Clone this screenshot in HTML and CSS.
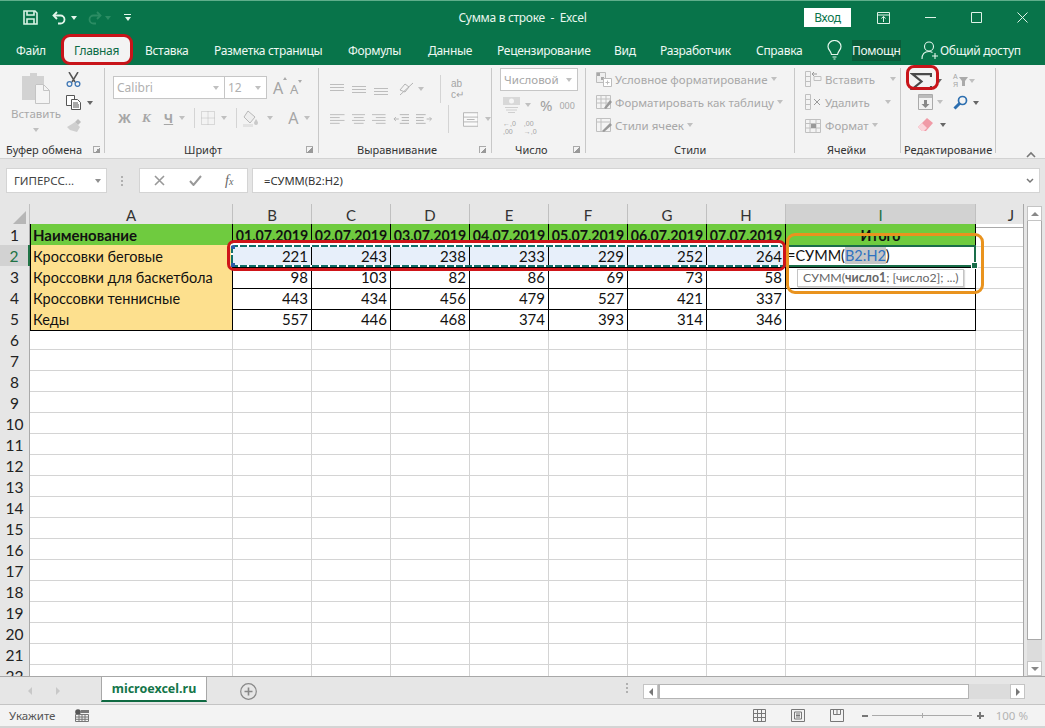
FILE: index.html
```html
<!DOCTYPE html>
<html lang="ru">
<head>
<meta charset="utf-8">
<title>Сумма в строке - Excel</title>
<link rel="stylesheet" href="styles.css">
</head>
<body>
<div class="app">
  <header class="titlebar">
    <div class="qat">
      <svg class="q-save" width="15" height="15" viewBox="0 0 15 15" fill="none" stroke="#d8f3e4" stroke-width="1.6"><path d="M1 1h11l2 2v11H1z"/><path d="M4 1v4h7V1M4 14V9h7v5"/></svg>
      <svg class="q-undo" width="15" height="14" viewBox="0 0 15 14" fill="none" stroke="#e4f6ec" stroke-width="1.8"><path d="M5 1 1.5 4.5 5 8"/><path d="M2 4.5h6.5a4 4 0 0 1 0 8H6"/></svg>
      <i class="caret c-white q-c1"></i>
      <svg class="q-redo" width="15" height="14" viewBox="0 0 15 14" fill="none" stroke="#2b8c63" stroke-width="1.8"><path d="M10 1l3.5 3.5L10 8"/><path d="M13 4.500H6.500a4 4 0 0 0 0 8H9"/></svg>
      <i class="caret c-dim q-c2"></i>
      <span class="q-more"><b></b><i class="caret c-white"></i></span>
    </div>
    <div class="doc-title">Сумма в строке&nbsp; -&nbsp; Excel</div>
    <div class="winctl">
      <button class="login">Вход</button>
      <svg class="w-disp" width="13" height="12" viewBox="0 0 13 12" fill="none" stroke="#dff3e8"><path d="M.5.500h12v11H.5zM.5 3h12M6.500 10V4.500M4.300 6.500l2.200-2 2.200 2"/></svg>
      <svg width="11" height="11" viewBox="0 0 11 11" stroke="#dff3e8"><path d="M0 5.500h11"/></svg>
      <svg width="11" height="11" viewBox="0 0 11 11" fill="none" stroke="#dff3e8"><path d="M.5.500h10v10H.5z"/></svg>
      <svg width="11" height="11" viewBox="0 0 11 11" stroke="#dff3e8"><path d="M.5.500l10 10M10.500.500l-10 10"/></svg>
    </div>
  </header>

  <nav class="tabs">
    <span class="tab">Файл</span>
    <span class="tab active">Главная</span>
    <span class="tab">Вставка</span>
    <span class="tab">Разметка страницы</span>
    <span class="tab">Формулы</span>
    <span class="tab">Данные</span>
    <span class="tab">Рецензирование</span>
    <span class="tab">Вид</span>
    <span class="tab">Разработчик</span>
    <span class="tab">Справка</span>
    <span class="tab tab-bulb"><svg width="15" height="20" viewBox="0 0 15 20" fill="none" stroke="#e4f6ec" stroke-width="1.2"><path d="M4.500 14.500C4 11 1 10 1 6.500a6.500 6 0 0 1 13 0C14 10 11 11 10.500 14.500zM5.500 17h4M6.500 19h2"/></svg></span>
    <span class="tab tab-help">Помощн</span>
    <span class="tab tab-share"><svg width="18" height="19" viewBox="0 0 18 19" fill="none" stroke="#e4f6ec" stroke-width="1.1"><circle cx="8" cy="5.500" r="4.500"/><path d="M1 18c0-5 3-7.500 7-7.500 1.500 0 2.500.3 3.500 1M14 12v6M11 15h6"/></svg>Общий доступ</span>
  </nav>

  <section class="ribbon">
    <div class="g g-clip">
      <div class="g-body clip-body">
        <div class="paste">
          <svg width="28" height="32" viewBox="0 0 28 32"><path fill="#d2d2d2" d="M0 4h8V1h7v3h7v8H13v16H0z"/><path fill="#f4f4f4" stroke="#c4c4c4" d="M13.500 12.500h8l6 6v13h-14z"/><path fill="none" stroke="#c4c4c4" d="M21.500 12.500v6h6"/></svg>
          <span class="paste-t">Вставить</span>
          <i class="caret c-light"></i>
        </div>
        <div class="clip-tools">
          <svg class="ct1" width="15" height="15" viewBox="0 0 15 15" fill="none"><path stroke="#555" stroke-width="1.500" d="M3 0l6 10M12 0L6 10"/><circle cx="3.500" cy="12" r="2.400" stroke="#3f77b5" stroke-width="1.300"/><circle cx="11.500" cy="12" r="2.400" stroke="#3f77b5" stroke-width="1.300"/></svg>
          <span class="ct-row"><svg width="16" height="15" viewBox="0 0 16 15" fill="#fff" stroke="#555"><path d="M.5.500h8v10h-8z"/><path d="M5.500 4.500h6l3 3v7h-9z"/><path d="M7 8h5M7 10h6M7 12h6"/></svg><i class="caret c-dark"></i></span>
          <svg width="16" height="15" viewBox="0 0 16 15"><path fill="#cfcfcf" d="M6 6l3-2 5 5-3 5-7-2-3-3z"/><path fill="#bdbdbd" d="M9 4l3-3 3 3-3 3z"/></svg>
        </div>
      </div>
      <div class="g-label lb-clip"><span>Буфер обмена</span><i class="launch"></i></div>
    </div>

    <div class="g g-font">
      <div class="g-body font-body">
        <div class="font-row1">
          <div class="combo">
            <span class="f-name">Calibri<i class="caret c-light"></i></span>
            <span class="f-size">12<i class="caret c-light"></i></span>
          </div>
          <span class="aa"><span>A</span><i class="up"></i></span>
          <span class="aa small"><span>A</span><i class="down"></i></span>
        </div>
        <div class="font-row2">
          <b class="b-zh">Ж</b>
          <b class="b-k">К</b>
          <b class="b-ch">Ч</b>
          <i class="caret c-light"></i>
          <i class="vsep"></i>
          <svg width="14" height="14" viewBox="0 0 14 14" fill="none" stroke="#bcbcbc" stroke-dasharray="1 1"><path d="M.5.500h13v13H.5zM7 .5v13M.5 7h13"/></svg>
          <i class="caret c-light"></i>
          <i class="vsep"></i>
          <svg width="18" height="17" viewBox="0 0 18 17"><path fill="#eee" stroke="#b8b8b8" d="M5 1l7 6-5 6-6-6z"/><path fill="#c9c9c9" d="M13 9c1.500 2 2 3 2 4a2 2 0 0 1-4 0c0-1 1-2 2-4z"/><path fill="#e2e2e2" d="M0 14h10v3H0z"/></svg>
          <i class="caret c-light"></i>
          <span class="a-color">A</span>
          <i class="caret c-light"></i>
        </div>
      </div>
      <div class="g-label lb-font"><span>Шрифт</span><i class="launch"></i></div>
    </div>

    <div class="g g-align">
      <div class="g-body align-body">
        <div class="al-row al-r1">
          <svg width="14" height="12" viewBox="0 0 14 12" stroke="#bdbdbd"><path d="M0 1.500h14M0 4.500h14M0 7.500h14"/></svg>
          <svg width="14" height="12" viewBox="0 0 14 12" stroke="#bdbdbd"><path d="M0 3.500h14M0 6.500h14M0 9.500h14"/></svg>
          <svg width="14" height="12" viewBox="0 0 14 12" stroke="#bdbdbd"><path d="M0 5.500h14M0 8.500h14M0 11.500h14"/></svg>
          <svg class="al-angle" width="15" height="14" viewBox="0 0 15 14" fill="none" stroke="#b4b4b4"><path d="M1 13 14 1M1 8l5-6 4 3-4 5z"/></svg>
          <i class="caret c-light"></i>
          <i class="vsep tall"></i>
          <span class="wrap">ab<br>c↵</span>
        </div>
        <div class="al-row al-r2">
          <svg width="15" height="12" viewBox="0 0 15 12" stroke="#bdbdbd"><path d="M0 1.500h15M0 4.500h10M0 7.500h15M0 10.500h10"/></svg>
          <svg width="14" height="12" viewBox="0 0 14 12" stroke="#bdbdbd"><path d="M0 1.500h14M2 4.500h10M0 7.500h14M2 10.500h10"/></svg>
          <svg width="14" height="12" viewBox="0 0 14 12" stroke="#bdbdbd"><path d="M0 1.500h14M4 4.500h10M0 7.500h14M4 10.500h10"/></svg>
          <svg width="17" height="12" viewBox="0 0 17 12" fill="none" stroke="#b4b4b4"><path d="M7 1.500h10M9 4.500h8M9 7.500h8M7 10.500h10M6 6H1M3 4 1 6l2 2"/></svg>
          <svg width="17" height="12" viewBox="0 0 17 12" fill="none" stroke="#b4b4b4"><path d="M0 1.500h10M0 4.500h8M0 7.500h8M0 10.500h10M11 6h5M14 4l2 2-2 2"/></svg>
          <i class="vsep tall"></i>
          <svg class="al-merge" width="16" height="15" viewBox="0 0 16 15" fill="#fafafa" stroke="#b4b4b4"><path d="M.5.500h15v14H.5zM.5 5h15M.5 10h15M4 7.500h8"/></svg>
          <i class="caret c-light"></i>
        </div>
      </div>
      <div class="g-label lb-align"><span>Выравнивание</span><i class="launch"></i></div>
    </div>

    <div class="g g-num">
      <div class="g-body num-body">
        <div class="num-select">Числовой<i class="caret c-light"></i></div>
        <div class="num-row2">
          <svg width="17" height="16" viewBox="0 0 17 16"><path fill="#d8d8d8" d="M0 0h17v8H0z"/><circle cx="8.500" cy="4" r="2.500" fill="#f5f5f5"/><path stroke="#cfcfcf" d="M2 10.500h13M3 13h11M5 15.500h7"/></svg>
          <i class="caret c-light"></i>
          <span class="pct">%</span>
          <span class="zeros">000</span>
        </div>
        <div class="num-row3">
          <span class="dec">←,0<br>,00</span>
          <span class="dec">,00<br>→,0</span>
        </div>
      </div>
      <div class="g-label lb-num"><span>Число</span><i class="launch"></i></div>
    </div>

    <div class="g g-sty">
      <div class="g-body sty-body">
        <div class="s-row"><svg width="16" height="15" viewBox="0 0 16 15" stroke="#bcbcbc" fill="#eee"><path d="M.5.500h9v10h-9z"/><path fill="#a8a8a8" stroke="none" d="M1 1h3v3H1zM5 5h3v3H5z"/><path fill="#fff" d="M7.500 6.500h8v8h-8z"/><path d="M9.500 10.500h4M11.500 8.500v4"/></svg><span>Условное форматирование</span><i class="caret c-light"></i></div>
        <div class="s-row"><svg width="16" height="15" viewBox="0 0 16 15" stroke="#c0c0c0" fill="#f4f4f4"><path d="M.5.500h14v13H.5zM.5 4h14M5 .5v13M10 .5v13M.5 8h14"/><path fill="#999" stroke="none" d="M8 13l6-8 2 2-6 7z"/></svg><span>Форматировать как таблицу</span><i class="caret c-light"></i></div>
        <div class="s-row"><svg width="16" height="15" viewBox="0 0 16 15" stroke="#c0c0c0" fill="#f4f4f4"><path d="M.5.500h14v13H.5zM.5 4h14M5 .5v13"/><path fill="#999" stroke="none" d="M6 13l8-8 2 2-8 7z"/></svg><span>Стили ячеек</span><i class="caret c-light"></i></div>
      </div>
      <div class="g-label lb-sty"><span>Стили</span></div>
    </div>

    <div class="g g-cells">
      <div class="g-body cell-body">
        <div class="s-row"><svg width="17" height="16" viewBox="0 0 17 16" fill="none" stroke="#c0c0c0"><path d="M.5.500h5v15h-5zM.5 5.500h5M.5 10.500h5M9 5.500h7v4H9z"/><path stroke="#999" d="M12 3 7 3M9 1 7 3l2 2"/></svg><span>Вставить</span><i class="caret c-light far"></i></div>
        <div class="s-row"><svg width="17" height="16" viewBox="0 0 17 16" fill="none" stroke="#c0c0c0"><path d="M.5.500h5v15h-5zM.5 5.500h5M.5 10.500h5"/><path stroke="#999" d="M9 5l6 6M15 5l-6 6"/></svg><span>Удалить</span><i class="caret c-light far"></i></div>
        <div class="s-row"><svg width="17" height="16" viewBox="0 0 17 16" fill="none" stroke="#c0c0c0"><path d="M.5 2.500h15v13H.5zM.5 6.500h15M.5 11h15M5 2.500v13M11 2.500v13"/><path fill="#999" stroke="none" d="M6 7h5v4H6z"/></svg><span>Формат</span><i class="caret c-light"></i></div>
      </div>
      <div class="g-label lb-cells"><span>Ячейки</span></div>
    </div>

    <div class="g g-edit">
      <div class="g-body edit-body">
        <div class="e-col1">
          <span class="e-row sigma"><svg width="22" height="17" viewBox="0 0 22 17" fill="none" stroke="#4a4a4a" stroke-width="2.200"><path d="M21 4V1.200H2.500l9 7.300-9 7.300H21V13"/></svg><i class="caret c-dark"></i></span>
          <span class="e-row e-fill"><svg width="15" height="16" viewBox="0 0 15 16" fill="#f2f2f2" stroke="#aaa"><path d="M.5.500h14v15H.5z"/><path fill="#bbb" stroke="none" d="M1 1h13v3H1z"/><path fill="#888" stroke="none" d="M6 6h3v4h2.500l-4 4-4-4H6z"/></svg><i class="caret c-light"></i></span>
          <span class="e-row e-erase"><svg width="15" height="14" viewBox="0 0 15 14"><path fill="#f09aa6" d="M9 0l6 5-7 8H4L0 9z"/><path fill="#fbd4da" d="M0 9l4-4 5 5-3 3H4z"/></svg><i class="caret c-dark"></i></span>
        </div>
        <div class="e-col2">
          <span class="e-row e-sort"><span class="az">А<br>Я</span><svg width="9" height="9" viewBox="0 0 9 9" fill="#aaa"><path d="M0 0h9L6 4v5H3V4z"/></svg><i class="caret c-light"></i></span>
          <span class="e-row e-find"><svg width="15" height="15" viewBox="0 0 15 15" fill="none" stroke="#2d6fb0"><circle cx="9.500" cy="5.500" r="4" stroke-width="1.700"/><path d="M6.500 8.500 1.500 13.500" stroke-width="3"/></svg><i class="caret c-dark"></i></span>
        </div>
      </div>
      <div class="g-label lb-edit"><span>Редактирование</span></div>
    </div>
    <div class="collapse"><svg width="10" height="7" viewBox="0 0 10 7" fill="none" stroke="#777" stroke-width="1.600"><path d="M1 6l4-4 4 4"/></svg></div>
  </section>

  <section class="fbar">
    <div class="namebox"><span>ГИПЕРСС...</span><i class="caret c-mid"></i></div>
    <div class="fdots"><i></i><i></i><i></i></div>
    <div class="fbtns">
      <svg width="11" height="11" viewBox="0 0 11 11" stroke="#999" stroke-width="1.600"><path d="M1 1l9 9M10 1l-9 9"/></svg>
      <svg width="13" height="11" viewBox="0 0 13 11" fill="none" stroke="#999" stroke-width="2"><path d="M1 6l3.500 4L12 1"/></svg>
      <span class="fx">f<small>x</small></span>
    </div>
    <div class="finput"><span>=СУММ(B2:H2)</span><svg width="8" height="6" viewBox="0 0 8 6" fill="none" stroke="#777" stroke-width="1.500"><path d="M1 1l3 3 3-3"/></svg></div>
  </section>

  <section class="sheetwrap">
    <div class="sheet">
      <div class="row head">
        <div class="corner"><i></i></div>
        <div class="ch">A</div><div class="ch">B</div><div class="ch">C</div><div class="ch">D</div><div class="ch">E</div><div class="ch">F</div><div class="ch">G</div><div class="ch">H</div><div class="ch ch-on">I</div><div class="ch ch-j">J</div>
      </div>
      <div class="row">
        <div class="rh">1</div>
        <div class="c name hdr">Наименование</div>
        <div class="c date">01.07.2019</div><div class="c date">02.07.2019</div><div class="c date">03.07.2019</div><div class="c date">04.07.2019</div><div class="c date">05.07.2019</div><div class="c date">06.07.2019</div><div class="c date">07.07.2019</div>
        <div class="c date total">Итого</div><div class="c e"></div>
      </div>
      <div class="row">
        <div class="rh rh-on">2</div>
        <div class="c name">Кроссовки беговые</div>
        <div class="c n sel">221</div><div class="c n sel">243</div><div class="c n sel">238</div><div class="c n sel">233</div><div class="c n sel">229</div><div class="c n sel">252</div><div class="c n sel">264</div>
        <div class="c editing">=СУММ(<span class="ref">B2:H2</span>)</div><div class="c e"></div>
      </div>
      <div class="row">
        <div class="rh">3</div>
        <div class="c name">Кроссовки для баскетбола</div>
        <div class="c n">98</div><div class="c n">103</div><div class="c n">82</div><div class="c n">86</div><div class="c n">69</div><div class="c n">73</div><div class="c n">58</div>
        <div class="c n"></div><div class="c e"></div>
      </div>
      <div class="row">
        <div class="rh">4</div>
        <div class="c name">Кроссовки теннисные</div>
        <div class="c n">443</div><div class="c n">434</div><div class="c n">456</div><div class="c n">479</div><div class="c n">527</div><div class="c n">421</div><div class="c n">337</div>
        <div class="c n"></div><div class="c e"></div>
      </div>
      <div class="row">
        <div class="rh">5</div>
        <div class="c name">Кеды</div>
        <div class="c n">557</div><div class="c n">446</div><div class="c n">468</div><div class="c n">374</div><div class="c n">393</div><div class="c n">314</div><div class="c n">346</div>
        <div class="c n"></div><div class="c e"></div>
      </div>
      <div class="row blank"><div class="rh">6</div></div>
      <div class="row blank"><div class="rh">7</div></div>
      <div class="row blank"><div class="rh">8</div></div>
      <div class="row blank"><div class="rh">9</div></div>
      <div class="row blank"><div class="rh">10</div></div>
      <div class="row blank"><div class="rh">11</div></div>
      <div class="row blank"><div class="rh">12</div></div>
      <div class="row blank"><div class="rh">13</div></div>
      <div class="row blank"><div class="rh">14</div></div>
      <div class="row blank"><div class="rh">15</div></div>
      <div class="row blank"><div class="rh">16</div></div>
      <div class="row blank"><div class="rh">17</div></div>
      <div class="row blank"><div class="rh">18</div></div>
      <div class="row blank"><div class="rh">19</div></div>
      <div class="row blank"><div class="rh">20</div></div>
      <div class="row blank"><div class="rh">21</div></div>
      <div class="row blank"><div class="rh">22</div></div>
    </div>
    <aside class="vscroll">
      <span class="sb-btn"><i class="tri-up"></i></span>
      <span class="sb-thumb"></span>
      <span class="sb-track"></span>
      <span class="sb-btn"><i class="tri-down"></i></span>
    </aside>
  </section>

  <section class="sheetbar">
    <i class="nav-l"></i><i class="nav-r"></i>
    <span class="sheet-tab">microexcel.ru</span>
    <svg class="addsheet" width="17" height="17" viewBox="0 0 17 17" fill="none" stroke="#888"><circle cx="8.500" cy="8.500" r="7.800" stroke-width="1.200"/><path d="M8.500 4.500v8M4.500 8.500h8" stroke-width="1.600"/></svg>
    <div class="fdots hdots"><i></i><i></i><i></i></div>
    <div class="hscroll">
      <span class="sb-btn h"><i class="tri-left"></i></span>
      <span class="h-thumb"></span>
      <span class="h-track"></span>
      <span class="sb-btn h"><i class="tri-right"></i></span>
    </div>
  </section>

  <footer class="status">
    <span class="st-text">Укажите</span>
    <svg class="st-macro" width="14" height="13" viewBox="0 0 14 13"><circle cx="3" cy="3" r="2.800" fill="#555"/><path fill="#777" d="M6 1h8v3H6z"/><path fill="none" stroke="#777" d="M.5 5.500h13v7H.5zM.5 8h13M.5 10.300h13M4 5.500v7M7 5.500v7M10 5.500v7"/></svg>
    <div class="views">
      <svg width="13" height="13" viewBox="0 0 13 13" fill="none" stroke="#777"><path d="M.5.500h12v12H.5zM4.500.5v12M8.500.5v12M.5 4.500h12M.5 8.500h12"/></svg>
      <svg width="14" height="13" viewBox="0 0 14 13" fill="none" stroke="#777"><path d="M.5.500h13v12H.5zM3.500 3h7v7h-7zM5 5h4M5 6.500h4M5 8h4"/></svg>
      <svg width="14" height="13" viewBox="0 0 14 13" fill="none" stroke="#777"><path d="M.5.500h13v12H.5zM3.500.5v5h7v-5M7 .5v5"/></svg>
    </div>
    <div class="zoomctl">
      <i class="z-minus"></i>
      <span class="z-line"><i></i></span>
      <span class="z-plus"></span>
      <span class="z-val">100 %</span>
    </div>
  </footer>

  <div class="ants"><i class="sq s1"></i><i class="sq s2"></i></div>
  <div class="ring-red"></div>
  <div class="active-cell"><i></i></div>
  <div class="ring-orange"></div>
  <div class="tip">СУММ(<b>число1</b>; [число2]; ...)</div>
  <div class="ring-sigma"></div>
</div>
</body>
</html>
```
FILE: styles.css
```css
*, *::before, *::after { box-sizing: border-box; }
html, body { margin: 0; padding: 0; }
body { font-family: "Noto Sans", "Open Sans", sans-serif; background: #f3f3f3; overflow: hidden; }
.app { position: relative; width: 1045px; height: 728px; display: flex; flex-direction: column; overflow: hidden; }
i { display: block; font-style: normal; }

.caret { width: 0; height: 0; border-left: 3.5px solid transparent; border-right: 3.5px solid transparent; border-top: 4px solid #bbb; flex: none; }
.c-white { border-top-color: #e4f6ec; }
.c-dim { border-top-color: #2b8c63; }
.c-light { border-top-color: #c0c0c0; }
.c-mid { border-top-color: #909090; }
.c-dark { border-top-color: #666; }

/* title bar */
.titlebar { height: 34px; flex: none; background: #08744a; border-top: 1px solid #5fae8b; display: grid; grid-template-columns: 1fr auto 1fr; align-items: center; color: #e8f6ef; }
.qat { display: flex; align-items: center; padding-left: 23px; }
.q-undo { margin-left: 14px; }
.q-c1 { margin-left: 4px; }
.q-redo { margin-left: 10px; }
.q-c2 { margin-left: 3px; }
.q-more { margin-left: 13px; display: flex; flex-direction: column; align-items: center; gap: 2px; }
.q-more b { width: 7px; height: 1px; background: #e4f6ec; }
.doc-title { font-size: 12px; letter-spacing: -.3px; white-space: nowrap; }
.winctl { display: flex; align-items: center; justify-content: flex-end; gap: 35px; padding-right: 17px; }
.login { width: 47px; height: 19px; border: 0; padding: 0; background: #fff; color: #08744a; font: 12px "Noto Sans", sans-serif; letter-spacing: -.3px; margin-right: -9px; }

/* tabs */
.tabs { height: 31px; flex: none; background: #08744a; color: #eef8f3; display: grid; grid-template-columns: 58px 71px 69px 134px 80px 69px 117px 46px 96px 69px 27px 69px auto; padding: 1px 0 0 16px; font-size: 12px; letter-spacing: -.3px; align-items: center; }
.tab { white-space: nowrap; position: relative; }
.tab.active { color: #0b6b45; z-index: 1; }
.tab.active::before { content: ""; position: absolute; left: -13px; top: -8px; width: 72px; height: 31px; background: #f3f3f3; border: 3px solid #c8141a; border-radius: 9px; z-index: -1; }
.tab-bulb svg { display: block; margin-left: 2px; }
.tab-help { background: #0a5b3a; justify-self: start; padding: 2px 0; }
.tab-share { display: flex; align-items: center; gap: 1px; }

/* ribbon */
.ribbon { height: 94px; flex: none; background: #f3f3f3; border-bottom: 1px solid #d2d2d2; display: flex; padding-top: 3px; color: #a8a8a8; font-size: 11.500px; }
.g { height: 85px; display: flex; flex-direction: column; border-right: 1px solid #c8c8c8; flex: none; }
.g-body { flex: 1; min-height: 0; }
.g-label { height: 16px; margin-bottom: -4px; display: flex; align-items: center; color: #333; font-size: 11px; white-space: nowrap; }
.launch { width: 7px; height: 7px; border-left: 1px solid #aaa; border-top: 1px solid #aaa; margin-left: auto; background: linear-gradient(135deg, transparent 50%, #999 50%); }
.g-clip { width: 105px; }
.g-font { width: 214px; }
.g-align { width: 173px; }
.g-num { width: 94px; }
.g-sty { width: 209px; }
.g-cells { width: 106px; }
.g-edit { width: 95px; }
.lb-clip { padding: 0 4px 0 6px; }
.lb-font { padding: 0 5px 0 79px; }
.lb-align { padding: 0 5px 0 38px; }
.lb-num { padding: 0 5px 0 23px; }
.lb-sty { padding-left: 88px; }
.lb-cells { padding-left: 32px; }
.lb-edit { padding-left: 3px; }

.clip-body { display: flex; }
.paste { width: 52px; margin-left: 10px; padding-top: 4px; display: flex; flex-direction: column; align-items: center; font-size: 11.500px; }
.paste-t { margin-top: 2px; line-height: 16px; }
.paste .caret { margin-top: 6px; }
.clip-tools { padding: 4px 0 0 4px; display: flex; flex-direction: column; gap: 8px; }
.ct-row { display: flex; align-items: center; gap: 5px; }

.font-body { padding: 8px 0 0 8px; }
.font-row1 { display: flex; align-items: center; }
.combo { display: flex; width: 154px; height: 23px; background: #fff; border: 1px solid #c6c6c6; font-size: 12px; color: #b0b0b0; }
.f-name { width: 111px; padding: 0 0 0 3px; display: flex; align-items: center; justify-content: space-between; border-right: 1px solid #c6c6c6; padding-right: 5px; }
.f-size { flex: 1; padding: 0 5px 0 3px; display: flex; align-items: center; justify-content: space-between; }
.aa { width: 23px; margin-left: 0; display: flex; font-size: 16px; color: #a4a4a4; padding-left: 6px; }
.aa.small { font-size: 13px; padding-left: 0; margin-top: 3px; }
.aa .up { width: 0; height: 0; border: 2.500px solid transparent; border-bottom: 3px solid #aaa; border-top: 0; }
.aa .down { width: 0; height: 0; border: 2.500px solid transparent; border-top: 3px solid #aaa; border-bottom: 0; }
.font-row2 { display: flex; align-items: center; height: 22px; margin-top: 8px; padding-left: 5px; color: #a6a6a6; font-size: 13px; }
.b-k { margin-left: 11px; font-style: italic; font-family: "Liberation Serif", serif; }
.b-ch { margin-left: 13px; text-decoration: underline; }
.font-row2 .caret { margin: 0 6px; }
.vsep { width: 1px; height: 20px; background: #d4d4d4; margin: 0 6px 0 3px; flex: none; }
.vsep.tall { height: 28px; margin: 0 9px 0 8px; }
.a-color { font-size: 16px; margin-left: 9px; }

.align-body { padding: 8px 0 0 11px; }
.al-row { display: flex; align-items: center; gap: 8px; height: 26px; }
.al-r2 { margin-top: 4px; gap: 7px; }
.al-angle { margin-left: 3px; }
.al-row .caret { margin-left: -4px; }
.al-r2 .caret { margin-left: 0; }
.al-merge { margin-left: -2px; }
.wrap { font: 10px/11.500px "Liberation Sans", sans-serif; color: #a4a4a4; margin-left: -7px; }

.num-body { padding-left: 8px; display: flex; flex-direction: column; }
.num-select { width: 78px; height: 23px; background: #fff; border: 1px solid #c6c6c6; display: flex; align-items: center; justify-content: space-between; padding: 0 5px 0 3px; font-size: 11.500px; color: #a6a6a6; }
.num-row2 { display: flex; align-items: center; height: 24px; margin-top: 2px; padding-left: 3px; }
.num-row2 .caret { margin-left: 5px; }
.pct { font-size: 15px; margin-left: 9px; color: #a0a0a0; }
.zeros { font-size: 9px; margin-left: 7px; }
.num-row3 { display: flex; gap: 8px; padding-left: 3px; margin-top: 3px; }
.dec { font: 7px/8px "Liberation Sans", sans-serif; color: #a4a4a4; }

.sty-body, .cell-body { padding-top: 3px; display: flex; flex-direction: column; gap: 7px; }
.sty-body { padding-left: 10px; }
.cell-body { padding-left: 10px; }
.s-row { display: flex; align-items: center; height: 16px; gap: 3px; white-space: nowrap; font-size: 11.500px; color: #a8a8a8; }
.s-row .caret { margin-left: 0; }
.s-row .far { margin-left: 12px; }

.edit-body { display: flex; padding: 3px 0 0 9px; }
.e-col1 { width: 43px; display: flex; flex-direction: column; align-items: flex-start; }
.e-row { display: flex; align-items: center; gap: 4px; }
.sigma { height: 20px; }
.e-fill { margin: 3px 0 0 8px; }
.e-erase { margin: 8px 0 0 8px; gap: 7px; }
.e-sort { height: 20px; gap: 1px; }
.az { font: 7px/8px "Liberation Sans", sans-serif; color: #a4a4a4; }
.e-find { margin-top: 4px; gap: 5px; }
.collapse { margin: 78px 0 0 30px; }

/* formula bar */
.fbar { height: 45px; flex: none; background: #e6e6e6; display: flex; padding: 9px 5px 11px 6px; }
.namebox { width: 101px; background: #fff; border: 1px solid #d4d4d4; display: flex; align-items: center; justify-content: space-between; padding: 0 5px 0 7px; font-size: 11.500px; color: #444; }
.fdots { width: 3px; display: flex; flex-direction: column; justify-content: center; gap: 2px; margin: 0 15px 0 14px; }
.fdots i { width: 2px; height: 2px; background: #b0b0b0; }
.fbtns { width: 109px; background: #fff; border: 1px solid #d4d4d4; display: flex; align-items: center; gap: 24px; padding-left: 14px; }
.fx { font: italic 14px "Liberation Serif", serif; color: #666; margin-left: -1px; }
.fx small { font-size: 10px; }
.finput { flex: 1; background: #fff; border: 1px solid #d4d4d4; margin-left: 4px; display: flex; align-items: center; justify-content: space-between; padding: 0 5px 0 11px; font-size: 11.200px; color: #333; }

/* sheet */
.sheetwrap { height: 473px; flex: none; display: flex; background: #e6e6e6; border-bottom: 1px solid #a8a8a8; }
.sheet { width: 1024px; flex: none; background: #fff; border-right: 1px solid #a8a8a8; overflow: hidden; font-family: "Lato", "Open Sans", "Noto Sans", sans-serif; }
.row { display: grid; grid-template-columns: 30px 203px repeat(7, 79px) 190px 47px; height: 21px; font-size: 15px; color: #111; }
.row.head { height: 20px; background: #e6e6e6; }
.corner { border-right: 1px solid #c0c0c0; border-bottom: 1px solid #c0c0c0; display: flex; justify-content: flex-end; align-items: flex-end; padding: 0 3px 3px 0; }
.corner i { width: 0; height: 0; border-left: 13px solid transparent; border-bottom: 13px solid #b6b6b6; }
.ch { border-right: 1px solid #c0c0c0; border-bottom: 1px solid #aaa; text-align: center; line-height: 22px; color: #333; }
.ch-j { padding-left: 23px; border-right: 0; }
.ch-on { background: #d2d2d2; color: #217346; border-bottom: 2px solid #217346; }
.rh { background: #e6e6e6; border-right: 1px solid #aaa; border-bottom: 1px solid #c0c0c0; text-align: center; line-height: 22px; color: #222; font-size: 15.500px; }
.rh-on { background: #d2d2d2; color: #217346; border-right: 2px solid #217346; }
.c { border-right: 1px solid #000; border-bottom: 1px solid #000; line-height: 22px; white-space: nowrap; overflow: hidden; }
.c.e { border-right: 0; border-bottom: 1px solid #d4d4d4; }
.name { background: #fde08e; padding-left: 2px; border-left: 1px solid #000; font-size: 14.500px; line-height: 23px; }
.hdr, .date { background: #6fcb3f; font-weight: 700; }
.hdr { font-size: 15px; line-height: 22px; }
.date { text-align: center; font-size: 14.200px; line-height: 24px; }
.n { text-align: right; padding-right: 3px; }
.sel { background: #e7effa; }
.editing { background: #fff; padding-left: 1px; font-size: 14.500px; }
.ref { color: #2f72c0; background: #c6c6c6; }
.row.blank { background-image:
  linear-gradient(#d4d4d4, #d4d4d4), linear-gradient(#d4d4d4, #d4d4d4), linear-gradient(#d4d4d4, #d4d4d4), linear-gradient(#d4d4d4, #d4d4d4), linear-gradient(#d4d4d4, #d4d4d4),
  linear-gradient(#d4d4d4, #d4d4d4), linear-gradient(#d4d4d4, #d4d4d4), linear-gradient(#d4d4d4, #d4d4d4), linear-gradient(#d4d4d4, #d4d4d4), linear-gradient(#d4d4d4, #d4d4d4);
  background-size: 1px 100%, 1px 100%, 1px 100%, 1px 100%, 1px 100%, 1px 100%, 1px 100%, 1px 100%, 1px 100%, 100% 1px;
  background-position: 232px 0, 311px 0, 390px 0, 469px 0, 548px 0, 627px 0, 706px 0, 785px 0, 975px 0, 0 100%;
  background-repeat: no-repeat; }

.vscroll { width: 15px; margin: 2px 0 0 3px; display: flex; flex-direction: column; }
.sb-btn { background: #fff; border: 1px solid #c4c4c4; height: 15px; flex: none; display: flex; align-items: center; justify-content: center; }
.sb-thumb { height: 419px; background: #fff; border: 1px solid #a8a8a8; border-top: 0; flex: none; }
.sb-track { flex: 1; background: #dcdcdc; }
.tri-up { width: 0; height: 0; border: 4px solid transparent; border-bottom: 4px solid #888; border-top: 0; }
.tri-down { width: 0; height: 0; border: 4px solid transparent; border-top: 4px solid #888; border-bottom: 0; }
.tri-left { width: 0; height: 0; border: 4px solid transparent; border-right: 4px solid #777; border-left: 0; }
.tri-right { width: 0; height: 0; border: 4px solid transparent; border-left: 4px solid #777; border-right: 0; }

/* sheet bar */
.sheetbar { height: 28px; flex: none; background: #e6e6e6; border-bottom: 1px solid #c4c4c4; display: flex; align-items: flex-start; }
.nav-l { width: 0; height: 0; margin: 10px 0 0 28px; border: 4px solid transparent; border-right: 4px solid #c8c8c8; border-left: 0; }
.nav-r { width: 0; height: 0; margin: 10px 0 0 24px; border: 4px solid transparent; border-left: 4px solid #c8c8c8; border-right: 0; }
.sheet-tab { width: 106px; height: 25px; margin-left: 41px; background: #fff; border-bottom: 2px solid #0f6a42; border-left: 1px solid #a8a8a8; border-right: 1px solid #a8a8a8; color: #14764a; font: 700 12.500px/24px "Noto Sans", sans-serif; text-align: center; }
.addsheet { margin: 6px 0 0 33px; flex: none; }
.fdots.hdots { margin: 6px 14px 0 369px; height: 12px; gap: 2px; justify-content: flex-start; }
.hscroll { margin: 7px 0 0 0; display: flex; height: 15px; width: 382px; }
.sb-btn.h { width: 15px; height: 15px; }
.h-thumb { width: 311px; background: #fff; border: 1px solid #b4b4b4; border-left-width: 2px; flex: none; }
.h-track { flex: 1; background: #dcdcdc; }

/* status */
.status { flex: 1; background: #f3f3f3; border-bottom: 2px solid #d4d4d4; display: flex; align-items: center; font-size: 11.500px; color: #555; padding-left: 9px; }
.st-macro { margin-left: 20px; }
.views { margin-left: auto; display: flex; gap: 25px; }
.zoomctl { display: flex; align-items: center; margin: 0 17px 0 18px; }
.z-minus { width: 6px; height: 2px; background: #777; }
.z-line { width: 100px; height: 1px; background: #aaa; margin: 0 5px 0 4px; position: relative; display: block; }
.z-line i { position: absolute; left: 50px; top: -2px; width: 1px; height: 5px; background: #aaa; }
.z-plus { width: 7px; height: 7px; background: linear-gradient(#777, #777) center / 7px 2px no-repeat, linear-gradient(#777, #777) center / 2px 7px no-repeat; }
.z-val { margin-left: 12px; color: #b4b4b4; font-size: 11.500px; }

/* overlays */
.ants { position: absolute; left: 231px; top: 245px; width: 555px; height: 22px;
  background:
    repeating-linear-gradient(90deg, #12706a 0 7px, #fff 7px 9px) 0 0 / 100% 2px no-repeat,
    repeating-linear-gradient(90deg, #12706a 0 7px, #fff 7px 9px) 0 100% / 100% 2px no-repeat,
    repeating-linear-gradient(0deg, #12706a 0 12px, #fff 12px 14px) 0 0 / 2px 100% no-repeat,
    repeating-linear-gradient(0deg, #12706a 0 12px, #fff 12px 14px) 100% 0 / 2px 100% no-repeat; }
.sq { position: absolute; left: 0; width: 4px; height: 4px; background: #2a5caa; }
.s1 { top: 0; }
.s2 { bottom: 0; }
.ring-red { position: absolute; left: 227px; top: 240px; width: 559px; height: 31px; border: 3px solid #cf1519; border-radius: 7px; box-shadow: inset 0 2px 0 #fff; }
.active-cell { position: absolute; left: 786px; top: 245px; width: 190px; height: 22px; border: 2px solid #1a6e4a; }
.active-cell i { position: absolute; right: -4px; bottom: -4px; width: 5px; height: 5px; background: #1a6e4a; border: 1px solid #fff; box-sizing: content-box; }
.ring-orange { position: absolute; left: 786px; top: 233px; width: 198px; height: 61px; border: 3px solid #e9931e; border-radius: 9px; }
.tip { position: absolute; left: 797px; top: 269px; width: 167px; height: 18px; background: #fff; border: 1px solid #c4c4c4; box-shadow: 1px 1px 1px rgba(0,0,0,.15); font: 12.300px/16px "Lato", "Noto Sans", sans-serif; color: #666; padding-left: 5px; white-space: nowrap; }
.ring-sigma { position: absolute; left: 906px; top: 65px; width: 33px; height: 25px; border: 3px solid #c8141a; border-radius: 8px; }
```
